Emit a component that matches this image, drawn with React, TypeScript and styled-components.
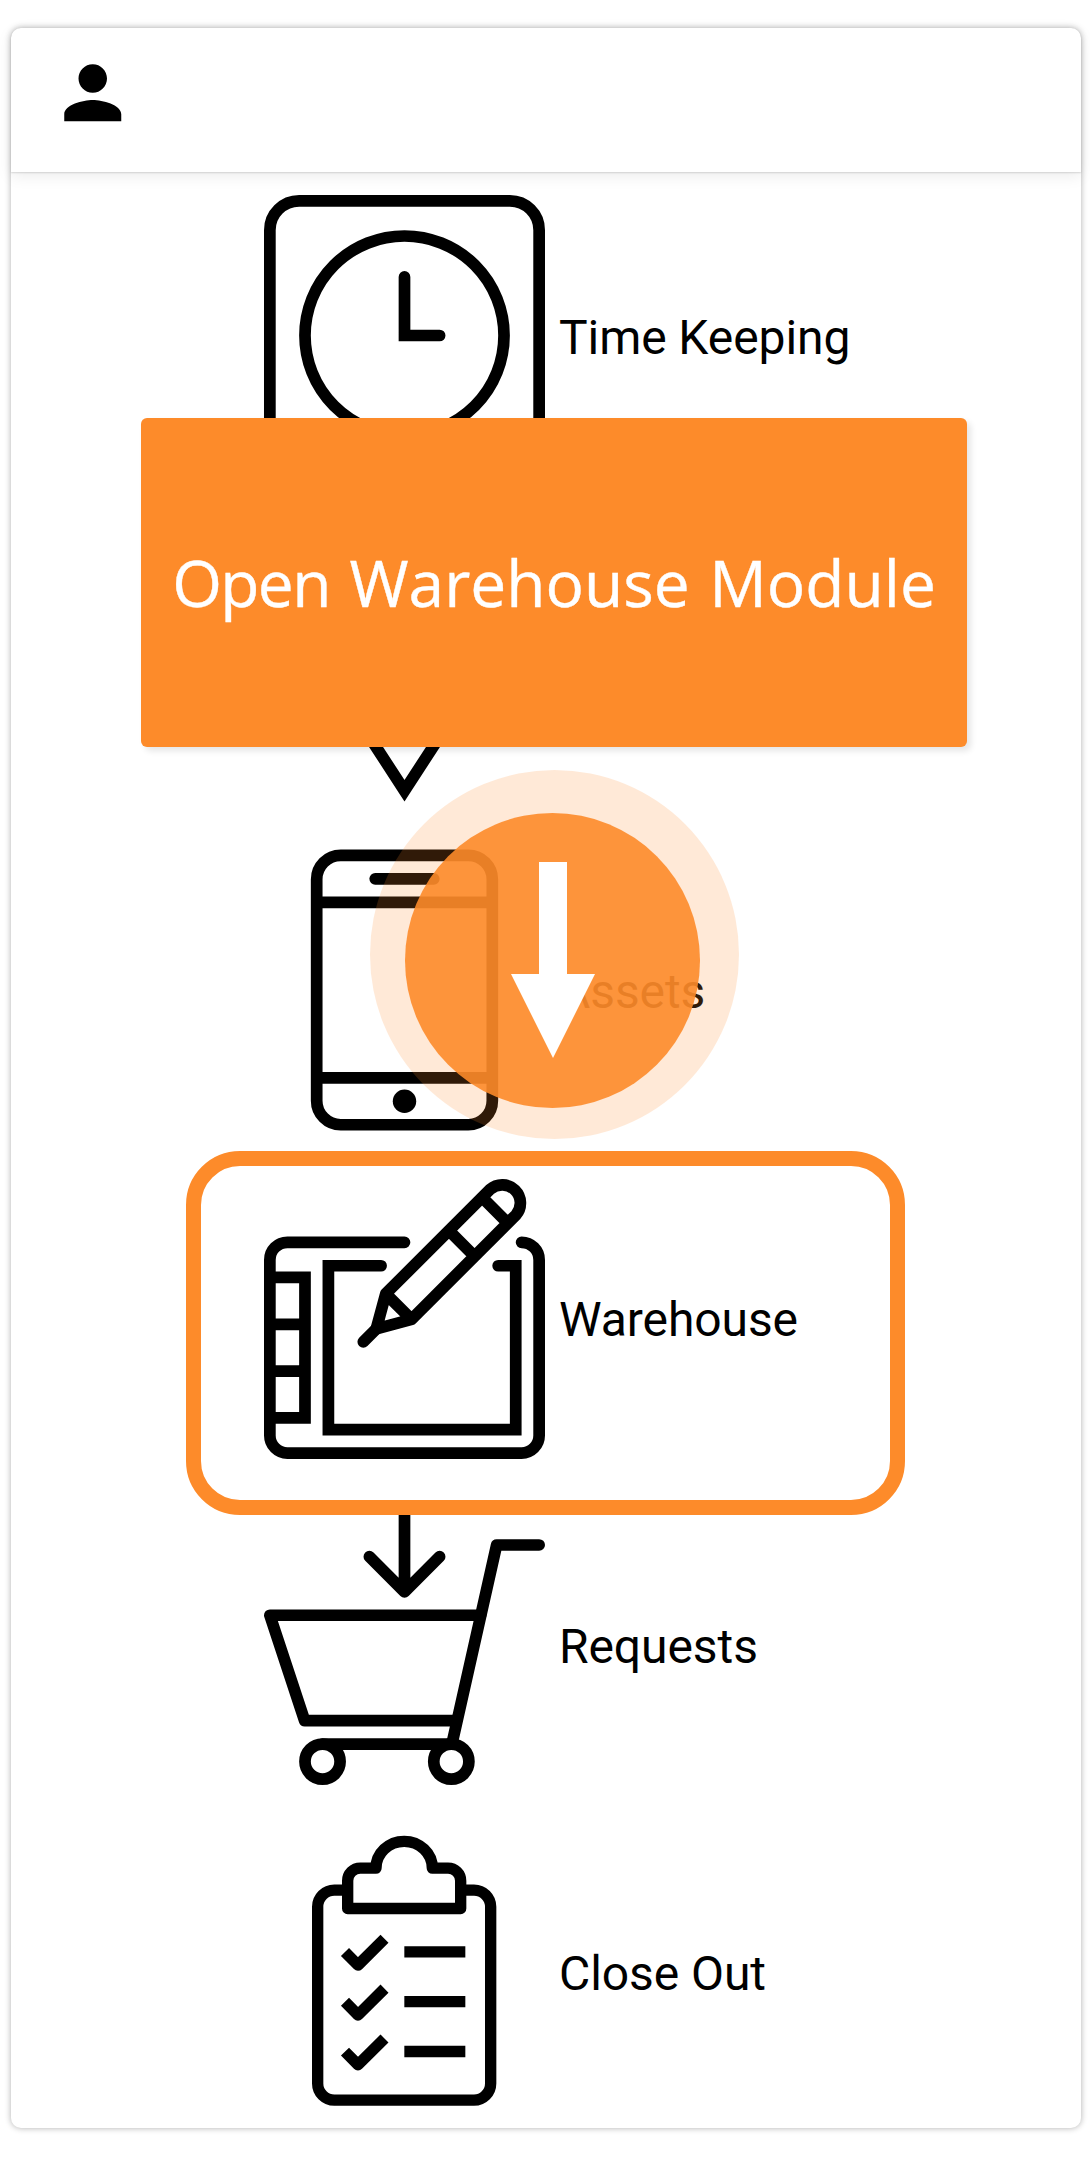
import React from "react";
import styled, { createGlobalStyle } from "styled-components";

const ORANGE = "#fd8b2a";

const GlobalStyle = createGlobalStyle`
  *, *::before, *::after { box-sizing: border-box; }
  body { margin: 0; background: #fff; font-family: Roboto, "Liberation Sans", sans-serif; }
`;

const Page = styled.div`
  position: relative;
  width: 1090px;
  height: 2157px;
  padding: 28px 9px 29px 11px;
  background: #fff;
  overflow: hidden;
`;

const Card = styled.section`
  display: flex;
  flex-direction: column;
  height: 2100px;
  border-radius: 10px;
  background: #fff;
  box-shadow: 0 0 6px rgba(0, 0, 0, 0.32);
`;

const Header = styled.header`
  display: flex;
  align-items: center;
  height: 144px;
  flex: none;
  padding-left: 39px;
  padding-bottom: 14px;
  border-radius: 10px 10px 0 0;
  box-shadow: 0 1px 2px rgba(0, 0, 0, 0.14), 0 4px 16px rgba(0, 0, 0, 0.08);
`;

const PersonIcon = styled.svg`
  width: 85.5px;
  height: 85.5px;
  fill: #000;
`;

const Menu = styled.ul`
  display: flex;
  flex-direction: column;
  gap: 46.3px;
  margin: 0;
  padding: 22.7px 0 0 253px;
  list-style: none;
`;

const MenuItem = styled.li`
  display: flex;
  align-items: center;
  gap: 14px;
  height: 281px;
`;

const Glyph = styled.svg`
  flex: none;
  width: 281px;
  height: 281px;
  overflow: visible;
  fill: none;
  stroke: #000;
`;

const Label = styled.span`
  padding-top: 5px;
  font-size: 48px;
  line-height: 56px;
  letter-spacing: -0.08px;
  color: #000;
  white-space: nowrap;
`;

const Highlight = styled.div`
  position: absolute;
  left: 186px;
  top: 1151px;
  width: 719px;
  height: 364px;
  border: 15px solid ${ORANGE};
  border-radius: 54px;
`;

const Banner = styled.div`
  position: absolute;
  left: 141px;
  top: 418px;
  width: 826px;
  height: 329px;
  display: flex;
  align-items: center;
  justify-content: center;
  border-radius: 6px;
  background: ${ORANGE};
  box-shadow: 4px 4px 6px rgba(0, 0, 0, 0.1);
`;

const BannerText = styled.span`
  flex: none;
  font-family: "Open Sans", "Noto Sans", sans-serif;
  font-size: 64px;
  line-height: 80px;
  word-spacing: 3px;
  color: #fff;
  -webkit-text-stroke: 0.4px #fff;
  white-space: nowrap;
`;

const TightWord = styled.span`
  letter-spacing: -1.6px;
`;

const Halo = styled.div`
  position: absolute;
  left: 370px;
  top: 770px;
  width: 369px;
  height: 369px;
  border-radius: 50%;
  background: rgba(253, 139, 42, 0.19);
`;

const Pointer = styled.div`
  position: absolute;
  left: 405px;
  top: 813px;
  width: 295px;
  height: 295px;
  border-radius: 50%;
  background: rgba(253, 139, 42, 0.9);
`;

const PointerArrow = styled.svg`
  display: block;
  width: 295px;
  height: 295px;
  fill: #fff;
`;

const ClockGlyph = () => (
  <Glyph viewBox="0 0 24 24">
    <rect x="0.5" y="0.5" width="23" height="23" rx="2.5" />
    <circle cx="12" cy="12" r="8.5" />
    <path d="M12 7V12H15" strokeLinecap="round" />
  </Glyph>
);

const PinGlyph = () => (
  <Glyph viewBox="0 0 24 24">
    <path d="M12 22.95L6.5 14.5C5.1 12.3 4.5 10.5 4.5 8A7.5 7.5 0 0 1 19.5 8C19.5 10.5 18.9 12.3 17.5 14.5Z" />
    <circle cx="12" cy="8" r="3" />
  </Glyph>
);

const PhoneGlyph = () => (
  <Glyph viewBox="0 -0.05 24 24">
    <rect x="4.5" y="0.5" width="15" height="23" rx="2.05" />
    <path d="M4.5 4.5H19.5M4.5 19.5H19.5" />
    <path d="M9.5 2.5H14.5" strokeLinecap="round" />
    <circle cx="12" cy="21.5" r="1" fill="#000" stroke="none" />
  </Glyph>
);

const TabletGlyph = () => (
  <Glyph viewBox="0 -0.08 24 24">
    <path
      strokeLinecap="round"
      d="M12 5.5H2A1.5 1.5 0 0 0 .5 7V22A1.5 1.5 0 0 0 2 23.5H22A1.5 1.5 0 0 0 23.5 22V7A1.5 1.5 0 0 0 22 5.5"
    />
    <path strokeLinecap="round" d="M10 7.5H5.5V21.5H21.5V7.5H20" />
    <path d="M.5 8.5H3.5V20.5H.5M.5 12.5H3.5M.5 16.5H3.5" />
    <path
      strokeLinejoin="round"
      d="M10.4 9.89L19.31.98A1.555 1.555 0 0 1 21.51 3.17L12.6 12.08L9.59 12.89ZM10.4 9.89L12.6 12.08M15.8 4.5L17.99 6.69M18.63 1.665L20.82 3.86"
    />
    <path strokeLinecap="round" d="M9.59 12.89L8.48 14" />
  </Glyph>
);

const CartGlyph = () => (
  <Glyph viewBox="0 0 24 24" strokeLinecap="round" strokeLinejoin="round">
    <path d="M12 .5V7.5M9 4.5L12 7.5L15 4.5" />
    <path d="M23.5 3.5H19.87L16.05 20.5" />
    <path d="M18.5 9.5H.5L3.47 18.5H16.4" />
    <path d="M5 20.5H16" />
    <circle cx="5" cy="22" r="1.5" fill="#fff" />
    <circle cx="16" cy="22" r="1.5" fill="#fff" />
  </Glyph>
);

const ClipboardGlyph = () => (
  <Glyph viewBox="-78 63.6 843 843" strokeWidth="34" strokeLinejoin="round">
    <path d="M173 241H133A50 50 0 0 0 83 291V821A50 50 0 0 0 133 871H552A50 50 0 0 0 602 821V291A50 50 0 0 0 552 241H512" />
    <path d="M173 296V213A38 38 0 0 1 211 175H258A84 80 0 0 1 427 175H474A38 38 0 0 1 512 213V296Z" />
    <path d="M165 426.5L204 466L283.5 387M165 576L204 615.5L283.5 536.5M165 725.5L204 765L283.5 686" />
    <path d="M343 426H526M343 575.5H526M343 725H526" />
  </Glyph>
);

const items = [
  { id: "time", label: "Time Keeping", Icon: ClockGlyph },
  { id: "pin", label: "", Icon: PinGlyph },
  { id: "assets", label: "Assets", Icon: PhoneGlyph },
  { id: "warehouse", label: "Warehouse", Icon: TabletGlyph },
  { id: "requests", label: "Requests", Icon: CartGlyph },
  { id: "close", label: "Close Out", Icon: ClipboardGlyph },
];

export default function App() {
  return (
    <Page>
      <GlobalStyle />
      <Card>
        <Header>
          <PersonIcon viewBox="0 0 24 24">
            <path d="M12 12c2.21 0 4-1.79 4-4s-1.79-4-4-4-4 1.79-4 4 1.79 4 4 4zm0 2c-2.67 0-8 1.34-8 4v2h16v-2c0-2.66-5.33-4-8-4z" />
          </PersonIcon>
        </Header>
        <Menu>
          {items.map(({ id, label, Icon }) => (
            <MenuItem key={id}>
              <Icon />
              {label && <Label>{label}</Label>}
            </MenuItem>
          ))}
        </Menu>
      </Card>
      <Highlight />
      <Halo />
      <Pointer>
        <PointerArrow viewBox="405 813 295 295">
          <path d="M539 862H567V974H595L553 1058L511 974H539Z" />
        </PointerArrow>
      </Pointer>
      <Banner>
        <BannerText>
          <TightWord>Open</TightWord> Warehouse Module
        </BannerText>
      </Banner>
    </Page>
  );
}
